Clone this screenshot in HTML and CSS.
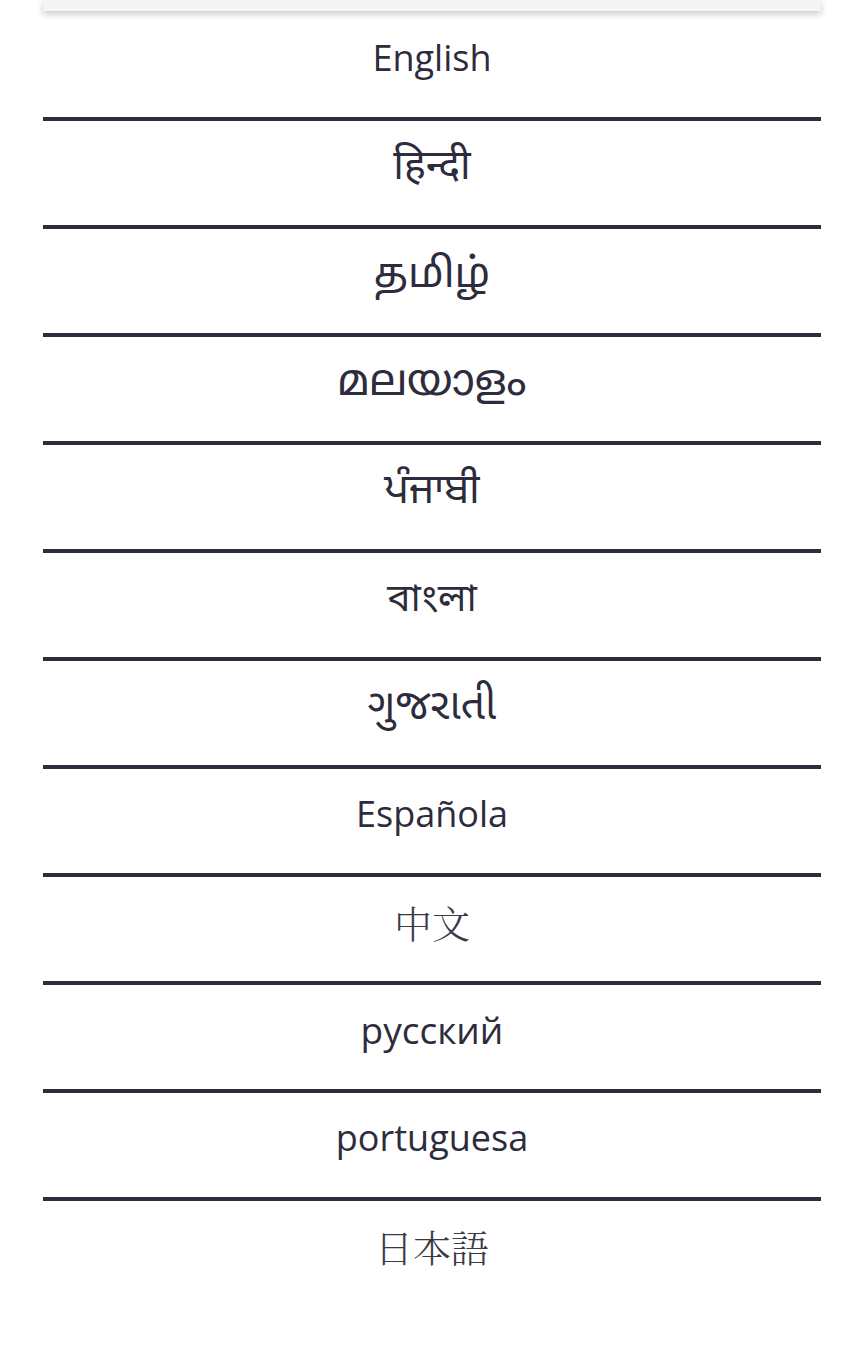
FILE: index.html
```html
<!DOCTYPE html>
<html lang="en">
<head>
<meta charset="utf-8">
<title>Languages</title>
<link rel="stylesheet" href="styles.css">
</head>
<body>
<div class="wrap">
  <div class="card-edge"></div>
  <ul class="langs">
    <li class="lang">English</li>
    <li class="lang indic hi" lang="hi">हिन्दी</li>
    <li class="lang indic ta" lang="ta">தமிழ்</li>
    <li class="lang indic ml" lang="ml">മലയാളം</li>
    <li class="lang indic pa" lang="pa">ਪੰਜਾਬੀ</li>
    <li class="lang indic bn" lang="bn">বাংলা</li>
    <li class="lang indic gu" lang="gu">ગુજરાતી</li>
    <li class="lang">Española</li>
    <li class="lang cjk-sc" lang="zh">中文</li>
    <li class="lang ru" lang="ru">русский</li>
    <li class="lang">portuguesa</li>
    <li class="lang cjk-jp last" lang="ja">日本語</li>
  </ul>
</div>
</body>
</html>
```
FILE: styles.css
```css
html, body {
  margin: 0;
  padding: 0;
  background: #ffffff;
}
.wrap {
  width: 778px;
  margin: 0 auto;
}
.card-edge {
  height: 11px;
  background: #f5f5f5;
  box-shadow: 0 3px 7px rgba(0, 0, 0, 0.22);
  margin-bottom: 2px;
}
.langs {
  list-style: none;
  margin: 0;
  padding: 0;
}
.lang {
  box-sizing: border-box;
  height: 108px;
  padding-top: 23px;
  border-bottom: 4px solid #2d2c3c;
  text-align: center;
  font-family: "Open Sans", "Noto Sans", sans-serif;
  font-size: 36px;
  font-weight: 400;
  line-height: 44px;
  color: #2d2c3c;
}
.lang.last {
  border-bottom: none;
}
.indic {
  padding-top: 26px;
}
.hi {
  font-family: "Noto Sans Devanagari", "Open Sans", sans-serif;
  font-size: 41px;
}
.ta {
  font-family: "Noto Sans Tamil", "Open Sans", sans-serif;
  font-size: 41.5px;
}
.ml {
  font-family: "Noto Sans Malayalam", "Open Sans", sans-serif;
  font-size: 44px;
}
.pa {
  font-family: "Noto Sans Gurmukhi", "Open Sans", sans-serif;
  font-size: 41.5px;
}
.bn {
  font-family: "Noto Sans Bengali", "Open Sans", sans-serif;
  font-size: 39px;
}
.gu {
  font-family: "Noto Sans Gujarati", "Open Sans", sans-serif;
  font-size: 42.5px;
}
.ru {
  font-size: 37px;
}
.cjk-sc {
  font-family: "Noto Serif CJK SC", "Noto Sans CJK SC", sans-serif;
  font-weight: 300;
  font-size: 38px;
  color: #3a3946;
}
.cjk-jp {
  font-family: "Noto Serif CJK JP", "Noto Sans CJK JP", sans-serif;
  font-weight: 300;
  font-size: 38px;
  color: #3a3946;
}
```
